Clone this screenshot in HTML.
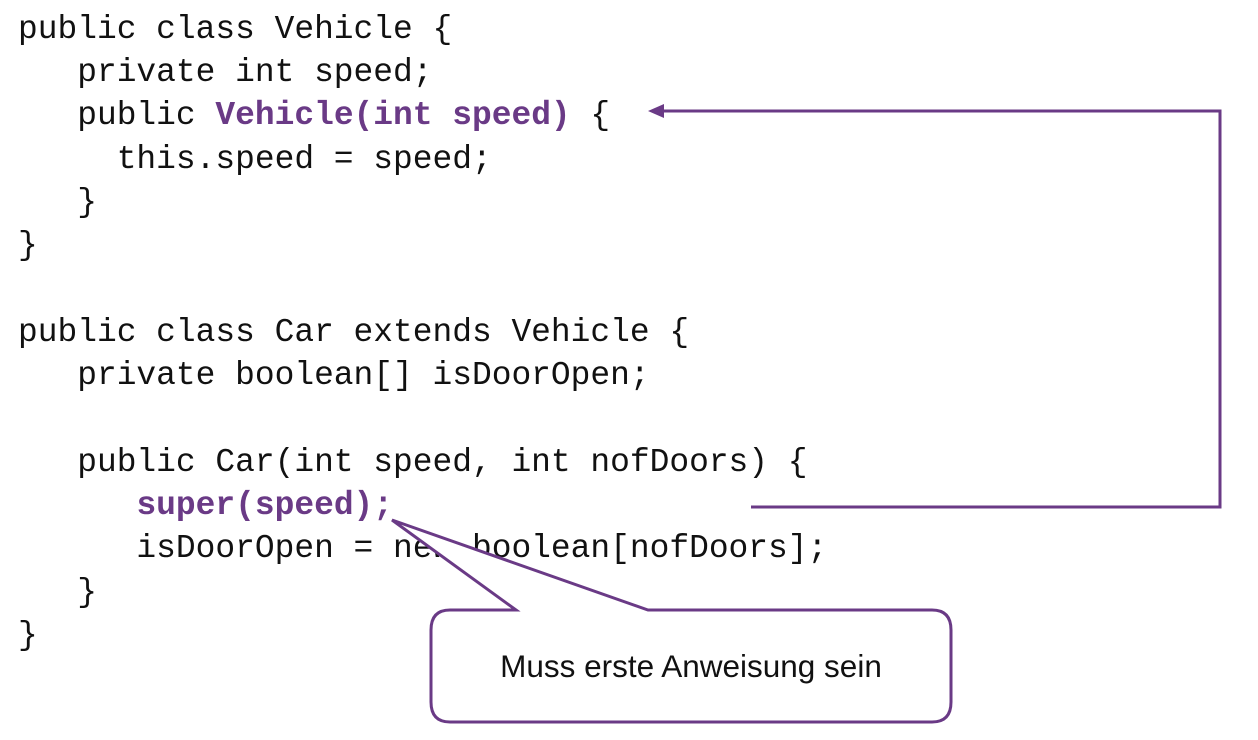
<!DOCTYPE html>
<html><head><meta charset="utf-8"><style>
html,body{margin:0;padding:0;background:#fff;width:1258px;height:740px;overflow:hidden;position:relative}
.l{position:absolute;left:18px;font-family:"Liberation Mono","DejaVu Sans Mono",monospace;font-size:32.9px;line-height:40px;white-space:pre;color:#111}
.p{color:#6a3a86;font-weight:bold}
svg{position:absolute;left:0;top:0}
.t{position:absolute;left:430px;width:522px;top:648px;text-align:center;font-family:"Liberation Sans",sans-serif;font-size:31.5px;color:#111}
</style></head><body>
<div class="l" style="top:10px">public class Vehicle {</div>
<div class="l" style="top:53px">   private int speed;</div>
<div class="l" style="top:96px">   public <span class="p">Vehicle(int speed)</span> {</div>
<div class="l" style="top:140px">     this.speed = speed;</div>
<div class="l" style="top:183px">   }</div>
<div class="l" style="top:226px">}</div>
<div class="l" style="top:313px">public class Car extends Vehicle {</div>
<div class="l" style="top:356px">   private boolean[] isDoorOpen;</div>
<div class="l" style="top:443px">   public Car(int speed, int nofDoors) {</div>
<div class="l" style="top:486px">      <span class="p">super(speed);</span></div>
<div class="l" style="top:529px">      isDoorOpen = new boolean[nofDoors];</div>
<div class="l" style="top:573px">   }</div>
<div class="l" style="top:616px">}</div>
<svg width="1258" height="740">
<polyline points="751,507 1220,507 1220,111 660,111" fill="none" stroke="#6a3a86" stroke-width="3"/>
<polygon points="648,111 664,104 664,118" fill="#6a3a86"/>
<path d="M516,610 L392,520 L648,610 L932,610 Q951,610 951,630 L951,702 Q951,722 932,722 L450,722 Q431,722 431,702 L431,630 Q431,610 450,610 Z" fill="#fff" stroke="#6a3a86" stroke-width="3"/>
</svg>
<div class="t">Muss erste Anweisung sein</div>
</body></html>
